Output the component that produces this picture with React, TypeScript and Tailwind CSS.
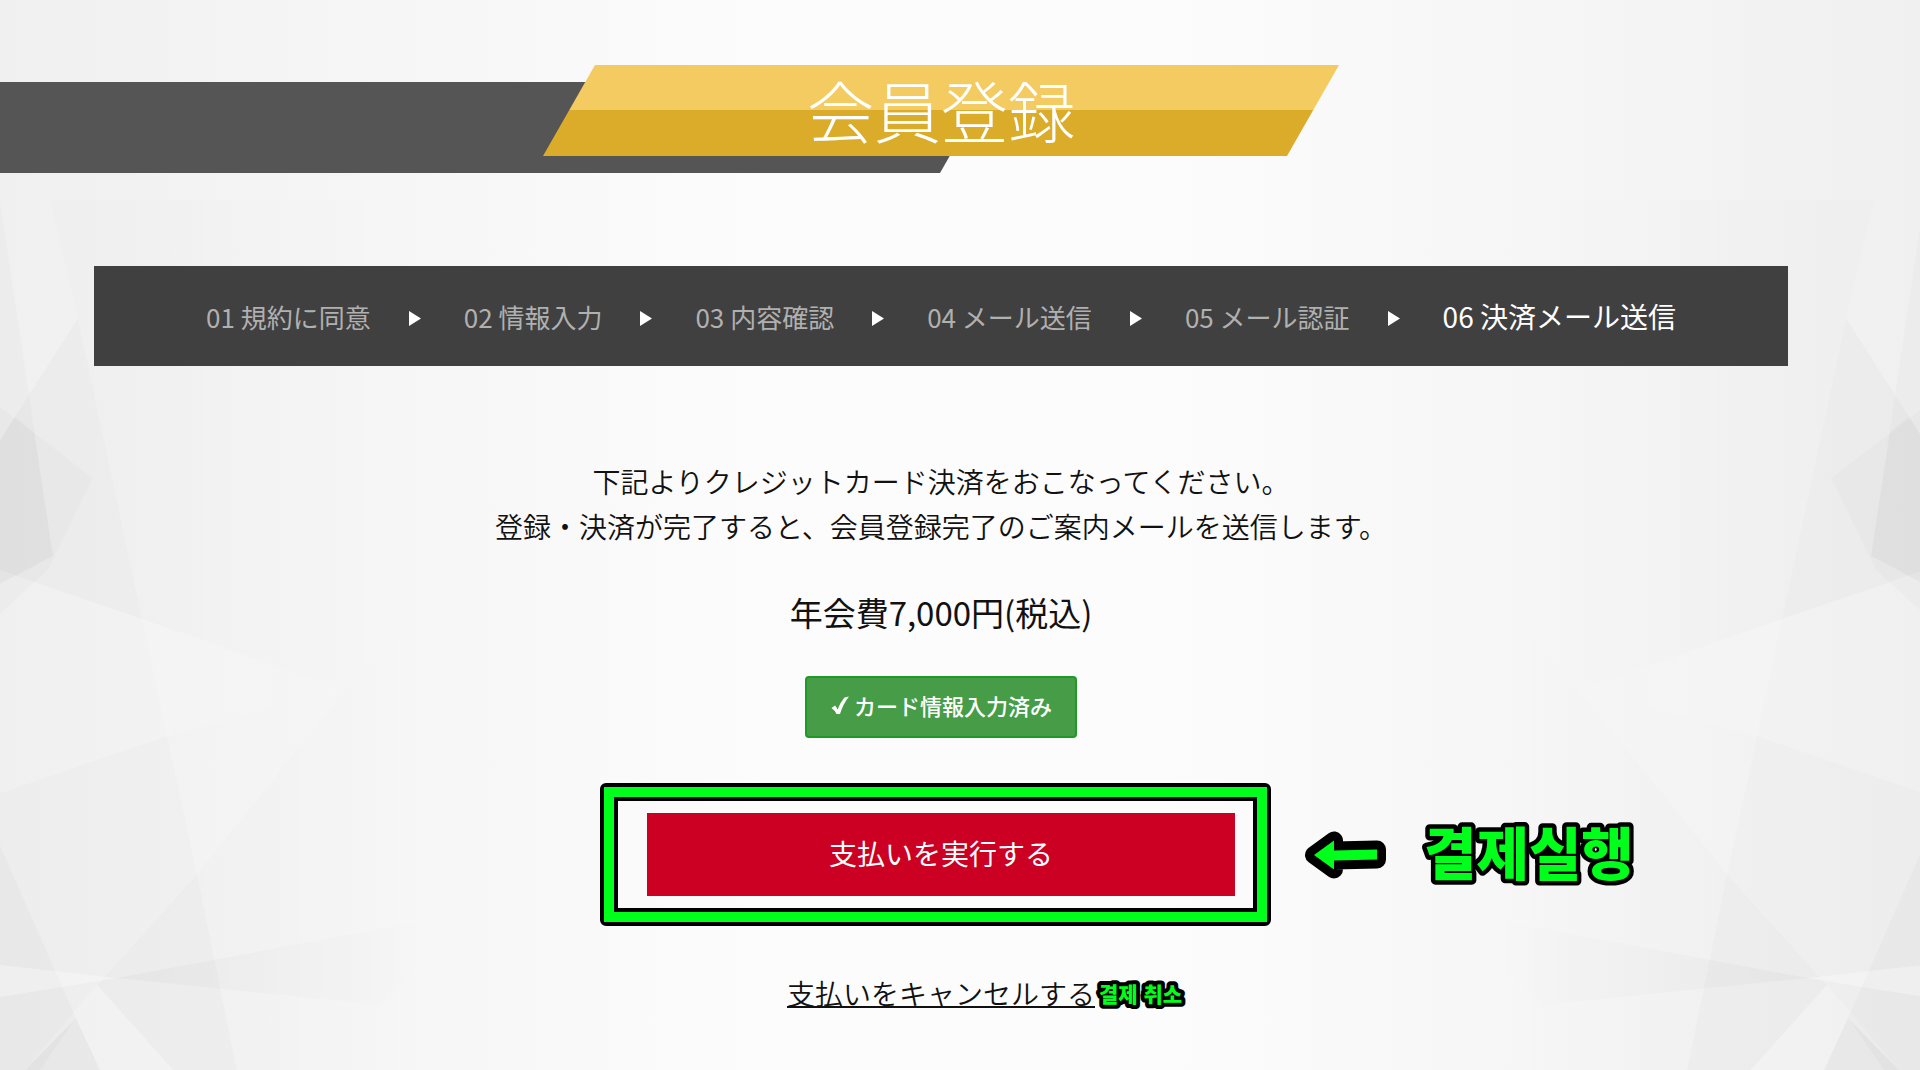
import React from 'react';

interface Step {
  no: string;
  label: string;
}

const steps: Step[] = [
  { no: '01', label: '規約に同意' },
  { no: '02', label: '情報入力' },
  { no: '03', label: '内容確認' },
  { no: '04', label: 'メール送信' },
  { no: '05', label: 'メール認証' },
  { no: '06', label: '決済メール送信' },
];

const currentStep = 5;

// 背景の多角形（左側。右側は反転して使う）
const Shards: React.FC = () => (
  <g>
    <polygon points="0,440 78,318 142,619 48,587 0,570" fill="#000" fillOpacity="0.018" />
    <polygon points="0,200 15,300 53,556 0,584" fill="#000" fillOpacity="0.016" />
    <polygon points="0,407 93,478 48,570 0,614" fill="#000" fillOpacity="0.016" />
    <polygon points="0,440 15,416 34,432 53,556 0,584" fill="#000" fillOpacity="0.014" />
    <polygon points="142,619 345,690 167,736" fill="url(#fadeLight)" />
    <polygon points="0,793 167,736 197,874 97,985 25,1070 0,1070" fill="#000" fillOpacity="0.012" />
    <polygon points="142,619 345,690 450,570 480,200 50,200 78,318" fill="url(#fadeDark)" fillOpacity="0.3" />
    <polygon points="197,874 345,690 450,570 460,720 520,1070 237,1070" fill="url(#fadeDark)" fillOpacity="0.5" />
    <polygon points="197,874 237,1070 173,1070 97,985" fill="#000" fillOpacity="0.024" />
    <polygon points="0,845 76,1018 40,1070 0,1070" fill="#000" fillOpacity="0.02" />
    <polygon points="25,1070 76,1018 100,1070" fill="#000" fillOpacity="0.035" />
    <polygon points="0,965 117,978 0,997" fill="#fff" fillOpacity="0.3" />
    <polygon points="117,978 480,910 380,1005" fill="url(#fadeDark)" />
  </g>
);

const Background: React.FC = () => (
  <svg
    className="absolute inset-0 h-full w-full"
    viewBox="0 0 1920 1070"
    preserveAspectRatio="none"
    aria-hidden="true"
  >
    <defs>
      <linearGradient id="base" x1="0" x2="1" y1="0" y2="0">
        <stop offset="0" stopColor="#f0f0f0" />
        <stop offset="0.2" stopColor="#f6f6f6" />
        <stop offset="0.4" stopColor="#fcfcfc" />
        <stop offset="0.6" stopColor="#fcfcfc" />
        <stop offset="0.8" stopColor="#f6f6f6" />
        <stop offset="1" stopColor="#f0f0f0" />
      </linearGradient>
      <linearGradient id="fadeDark" gradientUnits="userSpaceOnUse" x1="120" x2="440" y1="0" y2="0">
        <stop offset="0" stopColor="#000" stopOpacity="0.028" />
        <stop offset="1" stopColor="#000" stopOpacity="0" />
      </linearGradient>
      <linearGradient id="fadeLight" gradientUnits="userSpaceOnUse" x1="140" x2="340" y1="0" y2="0">
        <stop offset="0" stopColor="#fff" stopOpacity="0.15" />
        <stop offset="1" stopColor="#fff" stopOpacity="0" />
      </linearGradient>
    </defs>
    <rect width="1920" height="1070" fill="url(#base)" />
    <Shards />
    <g transform="translate(1924 0) scale(-1 1)">
      <Shards />
    </g>
  </svg>
);

const Banner: React.FC = () => (
  <header className="grid pt-[65px]">
    <div className="col-start-1 row-start-1 mt-[17px] h-[91px] w-[992px] bg-[#555555] [clip-path:polygon(0_0,100%_0,calc(100%-52px)_100%,0_100%)]" />
    <div className="col-start-1 row-start-1 flex h-[91px] w-[796px] items-center justify-center justify-self-center bg-linear-to-b from-[#f3cb61] from-50% to-[#dbac2a] to-50% pb-0.5 [clip-path:polygon(52px_0,100%_0,calc(100%-52px)_100%,0_100%)]">
      <h1 className="text-[67px] font-light text-white">会員登録</h1>
    </div>
  </header>
);

const StepNav: React.FC = () => (
  <nav className="mx-auto mt-[93px] w-9/10 bg-[#404040]">
    <ol className="flex h-[100px] items-center justify-center gap-[38px] whitespace-nowrap">
      {steps.map((step, index) => (
        <React.Fragment key={step.no}>
          {index > 0 && (
            <li aria-hidden="true">
              <svg className="h-5 w-[17px]" viewBox="0 0 17 20" fill="#fff">
                <path d="M0 5l12 7.5L0 20z" />
              </svg>
            </li>
          )}
          <li
            aria-current={index === currentStep ? 'step' : undefined}
            className={index === currentStep ? 'text-[28px] text-white' : 'text-[26px] text-[#b0b0b0]'}
          >
            {step.no} {step.label}
          </li>
        </React.Fragment>
      ))}
    </ol>
  </nav>
);

// 注釈用の共通スタイル（緑に黒フチ）
const outline = {
  fill: '#00ff1a',
  stroke: '#000',
  strokeLinejoin: 'round',
  paintOrder: 'stroke',
} as const;

const App: React.FC = () => {
  return (
    <div
      lang="ja"
      className="relative min-h-screen overflow-hidden font-['Noto_Sans_CJK_JP','Noto_Sans_CJK_KR',sans-serif] text-[#111]"
    >
      <Background />
      <div className="relative pr-[38px]">
        <Banner />
        <StepNav />

        <main className="flex flex-col items-center pt-[93px] pb-12 text-center">
          <p className="text-[28px] leading-[45px] font-[350]">
            下記よりクレジットカード決済をおこなってください。
            <br />
            登録・決済が完了すると、会員登録完了のご案内メールを送信します。
          </p>

          <p className="mt-[38px] text-[33px] leading-[50px]">年会費7,000円(税込)</p>

          <p className="mt-[39px] flex h-[62px] w-[272px] items-center justify-center gap-1 rounded-sm border-2 border-[#1f9a26] bg-[#479d47] pb-1 text-[22px] font-medium text-white">
            <svg className="h-5 w-5" viewBox="0 0 20 20" fill="#fff" aria-hidden="true">
              <path d="M1.5 13L5 10.500Q6.500 12 7.500 14.500Q10.500 7 14.500 2.500L19 1.500Q13 9 10 19H6.500Q4.500 15 1.500 13z" />
            </svg>
            カード情報入力済み
          </p>

          <div className="relative mt-[75px]">
            <button
              type="button"
              className="block h-[83px] w-[588px] cursor-pointer bg-[#cc0022] pb-1 text-[28px] text-white"
            >
              支払いを実行する
            </button>
            <div className="pointer-events-none absolute -inset-y-[30px] -right-9 -left-[47px] rounded-md border-4 border-black">
              <div className="h-full border-10 border-[#00ff1a]">
                <div className="h-full border-4 border-black" />
              </div>
            </div>
            <div className="absolute inset-y-0 left-full ml-[69px] flex items-center gap-8">
              <svg className="h-12 w-[84px]" viewBox="0 0 84 48" aria-hidden="true">
                <path d="M10 24L30 9.500V19.500L73 18.500V28.500L30 29.500V38.500z" strokeWidth="18" {...outline} />
              </svg>
              <svg className="h-24 w-60" viewBox="0 0 240 96" lang="ko">
                <text
                  x="4"
                  y="68"
                  strokeWidth="9"
                  className="font-['Noto_Sans_CJK_KR',sans-serif] text-[57px] font-black"
                  {...outline}
                >
                  결제실행
                </text>
              </svg>
            </div>
          </div>

          <div className="relative mt-[76px]">
            <a href="#cancel" className="text-[28px] font-[350] underline decoration-2">
              支払いをキャンセルする
            </a>
            <div className="absolute inset-y-0 left-full flex items-center">
              <svg className="h-10 w-24" viewBox="0 0 96 40" lang="ko">
                <text
                  x="4"
                  y="29"
                  strokeWidth="8"
                  className="font-['Noto_Sans_CJK_KR',sans-serif] text-[21px] font-black"
                  {...outline}
                >
                  결제 취소
                </text>
              </svg>
            </div>
          </div>
        </main>
      </div>
    </div>
  );
};

export default App;
